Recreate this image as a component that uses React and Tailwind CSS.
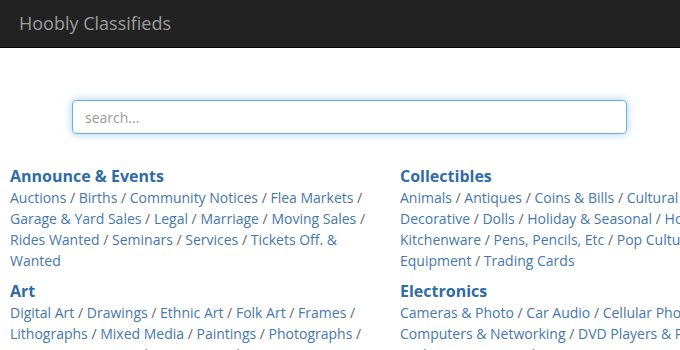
const columns = [
  [
    {
      title: "Announce & Events",
      items: ["Auctions", "Births", "Community Notices", "Flea Markets", "Garage & Yard Sales", "Legal", "Marriage", "Moving Sales", "Rides Wanted", "Seminars", "Services", "Tickets Off. & Wanted"],
    },
    {
      title: "Art",
      items: ["Digital Art", "Drawings", "Ethnic Art", "Folk Art", "Frames", "Lithographs", "Mixed Media", "Paintings", "Photographs", "Posters", "Prints", "Sculptures", "Supplies"],
    },
  ],
  [
    {
      title: "Collectibles",
      items: ["Animals", "Antiques", "Coins & Bills", "Cultural", "Ethnic", "Decorative", "Dolls", "Holiday & Seasonal", "Housewares", "Kitchenware", "Pens, Pencils, Etc", "Pop Culture", "Sports", "Equipment", "Trading Cards"],
    },
    {
      title: "Electronics",
      items: ["Cameras & Photo", "Car Audio", "Cellular Phones", "Computers & Networking", "DVD Players & Recorders", "Gadgets", "Home Audio"],
    },
  ],
];

function Category({ title, items }) {
  return (
    <div className="mb-[10px]">
      <h3 className="text-[16px] leading-[21px] font-bold text-[#2f6ca6]">{title}</h3>
      <p className="text-[14px] leading-[21px] text-[#666]">
        {items.map((it, i) => (
          <span key={it}>
            <a href="#" className="text-[#4577ad]">{it}</a>
            {i < items.length - 1 ? " / " : ""}
          </span>
        ))}
      </p>
    </div>
  );
}

export default function App() {
  return (
    <div className="w-[680px] h-[350px] overflow-hidden bg-white" style={{ fontFamily: '"Open Sans", "Liberation Sans", sans-serif' }}>
      <header className="h-[48px] bg-[#222] border-b border-[#080808] flex items-center px-[19px]">
        <span className="text-[18px] text-[#9d9d9d]">Hoobly Classifieds</span>
      </header>

      <div className="pt-[52px] pl-[72px]">
        <input
          autoFocus
          placeholder="search..."
          className="w-[555px] h-[34px] px-[12px] text-[14px] text-[#555] placeholder:text-[#999] rounded-[4px] border border-[#66afe9] shadow-[0_0_8px_rgba(102,175,233,0.6)] outline-none"
        />
      </div>

      <div className="w-[780px] flex pt-[32px]">
        {columns.map((col, ci) => (
          <div key={ci} className="w-[390px] pl-[10px] pr-[18px] shrink-0">
            {col.map((c) => (
              <Category key={c.title} {...c} />
            ))}
          </div>
        ))}
      </div>
    </div>
  );
}
